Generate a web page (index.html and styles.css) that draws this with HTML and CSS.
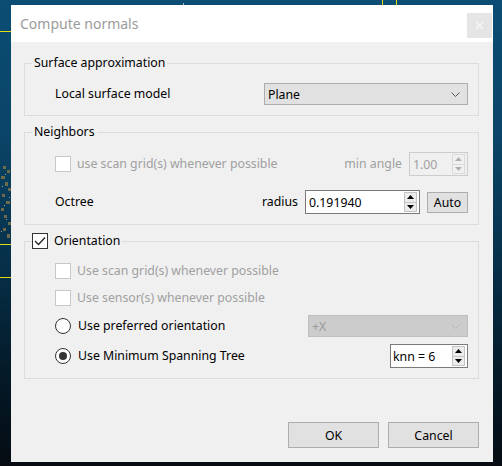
FILE: index.html
```html
<!DOCTYPE html>
<html>
<head>
<meta charset="utf-8">
<link rel="stylesheet" href="styles.css">
</head>
<body>
<svg class="backdrop" width="502" height="466" viewBox="0 0 502 466">
  <line x1="0" y1="31.5" x2="11" y2="31.5" stroke="#e4dc10" stroke-width="1"/>
  <line x1="382.5" y1="0" x2="382.5" y2="5" stroke="#e4dc10" stroke-width="1"/>
  <line x1="396.5" y1="0" x2="396.5" y2="5" stroke="#e4dc10" stroke-width="1"/>
  <line x1="183.5" y1="3" x2="183.5" y2="5" stroke="#9fb7c4" stroke-width="1"/>
  <line x1="0" y1="244.5" x2="11" y2="244.5" stroke="#e4dc10" stroke-width="1"/>
  <line x1="0" y1="277.5" x2="11" y2="277.5" stroke="#e4dc10" stroke-width="1"/>
  <g fill="#6e6a4c">
    <rect x="3" y="166" width="3" height="3"/><rect x="7" y="170" width="3" height="3"/>
    <rect x="1" y="176" width="4" height="3"/><rect x="5" y="182" width="3" height="4"/>
    <rect x="8" y="188" width="3" height="3"/><rect x="2" y="194" width="3" height="3"/>
    <rect x="6" y="201" width="4" height="3"/><rect x="1" y="208" width="3" height="3"/>
    <rect x="4" y="215" width="3" height="3"/><rect x="8" y="222" width="3" height="3"/>
    <rect x="3" y="228" width="3" height="3"/><rect x="7" y="234" width="3" height="4"/>
  </g>
  <g fill="#a8a488">
    <rect x="5" y="174" width="1" height="1"/><rect x="2" y="186" width="1" height="1"/>
    <rect x="9" y="197" width="1" height="1"/><rect x="4" y="205" width="1" height="1"/>
    <rect x="6" y="219" width="1" height="1"/><rect x="1" y="231" width="1" height="1"/>
  </g>
</svg>

<div class="dialog">
  <div class="titlebar">
    <span class="title">Compute normals</span>
    <span class="close">
      <svg width="9" height="9" viewBox="0 0 9 9"><path d="M1 1L8 8M8 1L1 8" stroke="#f7f7f7" stroke-width="1.2"/></svg>
    </span>
  </div>

  <div class="client">
    <fieldset class="group g1">
      <legend class="gtitle">Surface approximation</legend>
      <div class="gbody">
        <div class="row h22 spread">
          <span class="label">Local surface model</span>
          <div class="combo w204">
            <span>Plane</span>
            <svg class="chev" width="9" height="5" viewBox="0 0 9 5"><polyline points="0.5,0.5 4.5,4.5 8.5,0.5" fill="none" stroke="#555" stroke-width="1"/></svg>
          </div>
        </div>
      </div>
    </fieldset>

    <fieldset class="group g2">
      <legend class="gtitle">Neighbors</legend>
      <div class="gbody">
        <div class="row h24">
          <span class="chk dis"></span>
          <span class="label dis-t gap6">use scan grid(s) whenever possible</span>
          <span class="label dis-t push">min angle</span>
          <div class="spin dis w59 ml7">
            <span class="val">1.00</span>
            <div class="arrows">
              <span class="arr"><svg width="7" height="4" viewBox="0 0 7 4"><polygon points="3.5,0 7,4 0,4" fill="#b0b0b0"/></svg></span>
              <span class="arr"><svg width="7" height="4" viewBox="0 0 7 4"><polygon points="0,0 7,0 3.5,4" fill="#b0b0b0"/></svg></span>
            </div>
          </div>
        </div>
        <div class="row h24 mt14">
          <span class="label">Octree</span>
          <span class="label push">radius</span>
          <div class="spin w115 ml7">
            <span class="val">0.191940</span>
            <div class="arrows">
              <span class="arr"><svg width="7" height="4" viewBox="0 0 7 4"><polygon points="3.5,0 7,4 0,4" fill="#000"/></svg></span>
              <span class="arr"><svg width="7" height="4" viewBox="0 0 7 4"><polygon points="0,0 7,0 3.5,4" fill="#000"/></svg></span>
            </div>
          </div>
          <span class="btn auto">Auto</span>
        </div>
      </div>
    </fieldset>

    <fieldset class="group g3">
      <legend class="gtitle chk-title">
        <span class="chk on">
          <svg width="12" height="10" viewBox="0 0 12 10"><polyline points="1,5 4.5,8.5 11,1.5" fill="none" stroke="#222" stroke-width="1.3"/></svg>
        </span>
        <span class="gap6">Orientation</span>
      </legend>
      <div class="gbody pad-or">
        <div class="row h16">
          <span class="chk dis"></span>
          <span class="label dis-t gap6">Use scan grid(s) whenever possible</span>
        </div>
        <div class="row h16 mt11">
          <span class="chk dis"></span>
          <span class="label dis-t gap6">Use sensor(s) whenever possible</span>
        </div>
        <div class="row h22 mt9">
          <span class="radio"></span>
          <span class="label gap7">Use preferred orientation</span>
          <div class="combo dis w160 push">
            <span>+X</span>
            <svg class="chev" width="9" height="5" viewBox="0 0 9 5"><polyline points="0.5,0.5 4.5,4.5 8.5,0.5" fill="none" stroke="#b8b8b8" stroke-width="1"/></svg>
          </div>
        </div>
        <div class="row h24 mt7">
          <span class="radio on"><span class="dot"></span></span>
          <span class="label gap7">Use Minimum Spanning Tree</span>
          <div class="spin w78 push">
            <span class="val knn">knn = 6</span>
            <div class="arrows">
              <span class="arr"><svg width="7" height="4" viewBox="0 0 7 4"><polygon points="3.5,0 7,4 0,4" fill="#000"/></svg></span>
              <span class="arr"><svg width="7" height="4" viewBox="0 0 7 4"><polygon points="0,0 7,0 3.5,4" fill="#000"/></svg></span>
            </div>
          </div>
        </div>
      </div>
    </fieldset>

    <div class="footer">
      <span class="btn dlg">OK</span>
      <span class="btn dlg">Cancel</span>
    </div>
  </div>
</div>
</body>
</html>
```

FILE: styles.css
```css
html, body {
  margin: 0;
  padding: 0;
}
body {
  width: 502px;
  height: 466px;
  overflow: hidden;
  position: relative;
  background: linear-gradient(180deg, #0b4d74 0%, #0a4466 30%, #07314b 55%, #041a28 80%, #060c12 100%);
  font-family: "Noto Sans", "Open Sans", sans-serif;
  font-size: 12.3px;
  color: #000;
}
.backdrop {
  position: absolute;
  left: 0;
  top: 0;
  z-index: 0;
}
.dialog {
  position: relative;
  z-index: 1;
  margin: 5px 0 0 11px;
  width: 482px;
  height: 457px;
  display: flex;
  flex-direction: column;
}
.titlebar {
  height: 37px;
  background: #fff;
  display: flex;
  align-items: flex-start;
  justify-content: space-between;
}
.title {
  margin: 9px 0 0 9px;
  font-size: 14px;
  line-height: 20px;
  color: #9b9b9b;
}
.close {
  margin: 8px 1px 0 0;
  width: 25px;
  height: 25px;
  background: #e5e5e5;
  display: flex;
  align-items: center;
  justify-content: center;
}
.client {
  flex: 1;
  background: #f0f0f0;
  padding: 13px 14px 14px 13px;
  display: flex;
  flex-direction: column;
}
.group {
  margin: 0;
  padding: 0;
  border: 1px solid #dcdcdc;
  min-width: 0;
}
.g2, .g3 {
  margin-top: 8px;
}
.gtitle {
  margin-left: 7px;
  padding: 0 2px;
  line-height: 16px;
  height: 16px;
}
.chk-title {
  padding: 0 2px 0 0;
  display: flex;
  align-items: center;
}
.gbody {
  display: flex;
  flex-direction: column;
  padding: 12px 10px 10px 30px;
}
.pad-or {
  padding-top: 14px;
}
.row {
  display: flex;
  align-items: center;
}
.spread { justify-content: space-between; }
.h16 { height: 16px; }
.h22 { height: 22px; }
.h24 { height: 24px; }
.mt7 { margin-top: 7px; }
.mt9 { margin-top: 9px; }
.mt11 { margin-top: 11px; }
.mt14 { margin-top: 14px; }
.gap6 { margin-left: 6px; }
.gap7 { margin-left: 7px; }
.ml7 { margin-left: 7px; }
.push { margin-left: auto; }
.label {
  white-space: nowrap;
  line-height: 16px;
}
.dis-t { color: #a0a0a0; }

.combo {
  box-sizing: border-box;
  height: 22px;
  border: 1px solid #adadad;
  background: #e1e1e1;
  display: flex;
  align-items: center;
  justify-content: space-between;
  padding: 0 7px 0 3px;
}
.combo.dis {
  background: #cccccc;
  border-color: #bfbfbf;
  color: #9a9a9a;
}
.w204 { width: 204px; }
.w160 { width: 160px; }
.chev { display: block; }

.chk {
  box-sizing: border-box;
  width: 16px;
  height: 16px;
  flex: none;
  background: #fff;
  border: 1px solid #333;
  display: flex;
  align-items: center;
  justify-content: center;
}
.chk.dis {
  border-color: #c8c8c8;
}
.radio {
  box-sizing: border-box;
  width: 16px;
  height: 16px;
  flex: none;
  border: 1px solid #333;
  border-radius: 50%;
  background: #fff;
  display: flex;
  align-items: center;
  justify-content: center;
}
.dot {
  width: 8px;
  height: 8px;
  border-radius: 50%;
  background: #333;
}

.spin {
  box-sizing: border-box;
  height: 24px;
  border: 1px solid #7a7a7a;
  background: #fff;
  display: flex;
  align-items: stretch;
  justify-content: space-between;
}
.spin.dis {
  border-color: #cccccc;
  background: #f0f0f0;
  color: #a0a0a0;
}
.w59 { width: 59px; }
.w115 { width: 115px; }
.w78 { width: 78px; }
.val {
  padding-left: 3px;
  display: flex;
  align-items: center;
}
.knn { padding-left: 2px; }
.arrows {
  width: 13px;
  margin: 1px 2px 1px 0;
  display: flex;
  flex-direction: column;
}
.arr {
  flex: 1;
  box-sizing: border-box;
  border: 1px solid #c4c4c4;
  background: #ececec;
  display: flex;
  align-items: center;
  justify-content: center;
}
.arr + .arr { border-top: none; }
.spin.dis .arr {
  border-color: #dadada;
  background: #f0f0f0;
}

.btn {
  box-sizing: border-box;
  border: 1px solid #adadad;
  background: #e1e1e1;
  display: flex;
  align-items: center;
  justify-content: center;
}
.auto {
  width: 41px;
  height: 21px;
  margin-left: 7px;
}
.footer {
  margin-top: auto;
  display: flex;
  justify-content: flex-end;
  gap: 9px;
}
.dlg {
  width: 91px;
  height: 26px;
}
```
